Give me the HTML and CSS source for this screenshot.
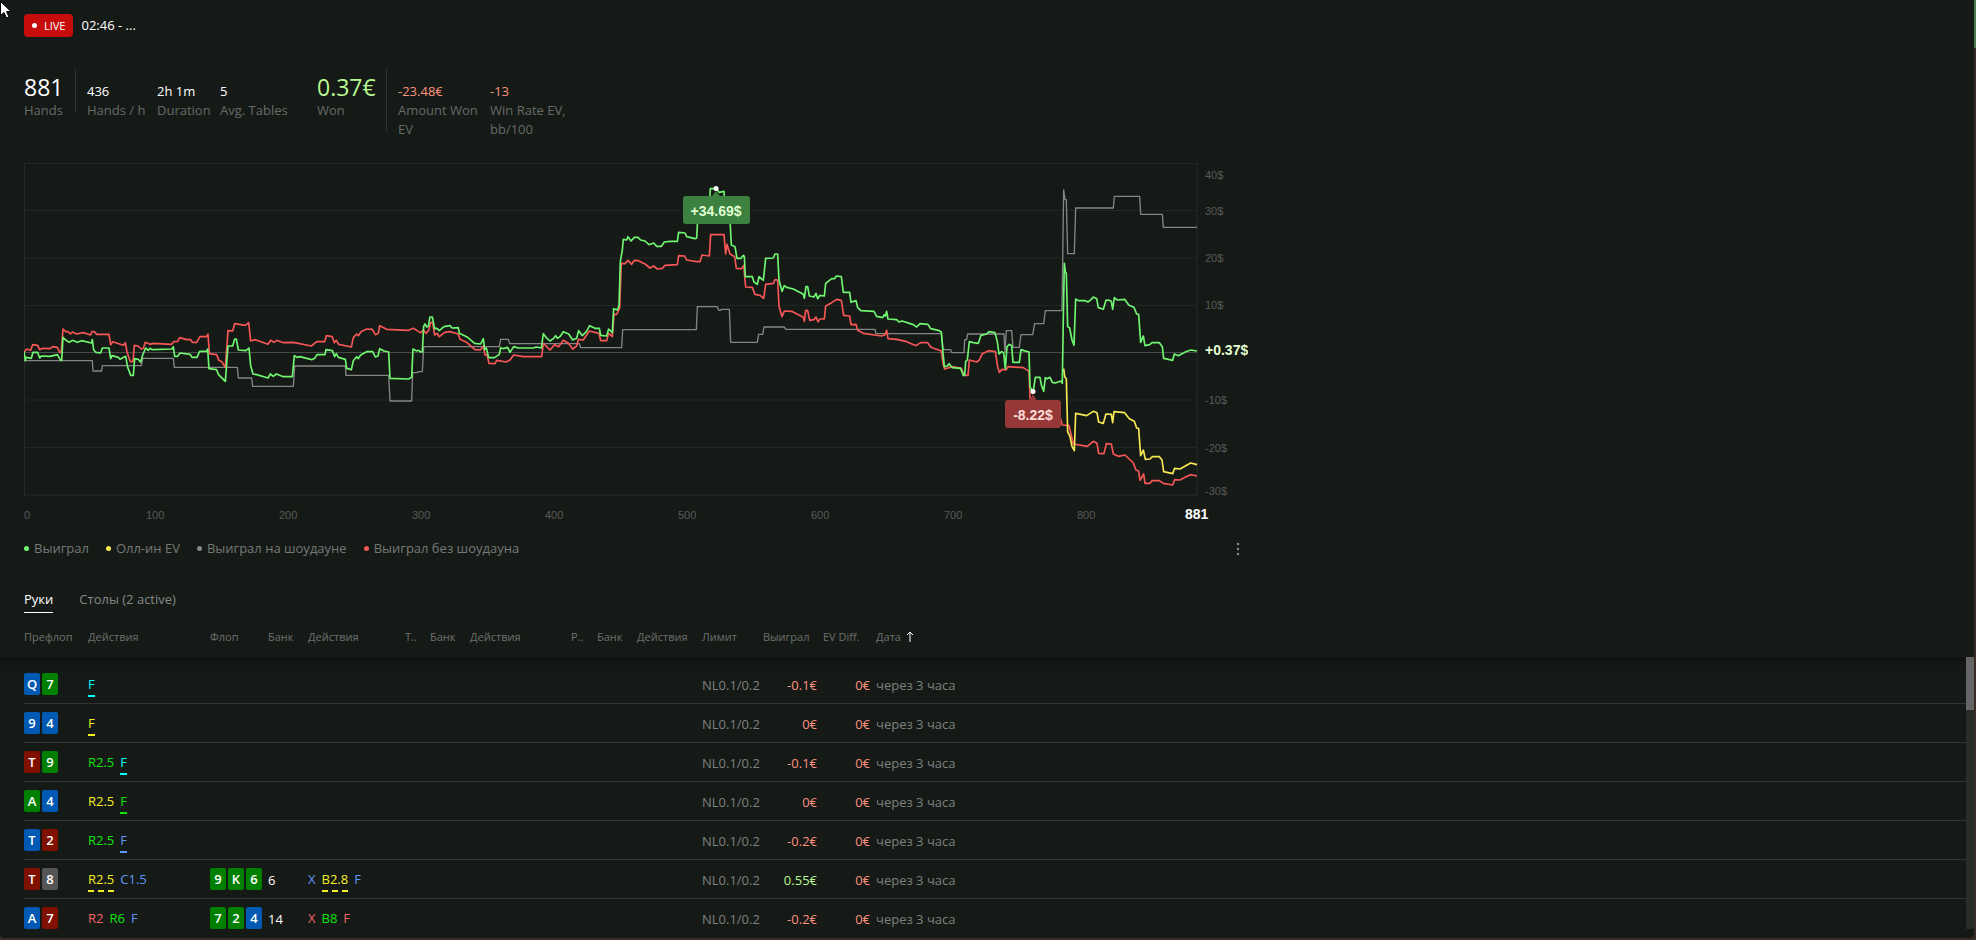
FILE: index.html
```html
<!DOCTYPE html>
<html lang="ru">
<head>
<meta charset="utf-8">
<title>02:46 - ...</title>
<link rel="stylesheet" href="styles.css">
</head>
<body>
<svg class="cursor" width="12" height="20" viewBox="0 0 12 20" aria-hidden="true"><path d="M.5 1.500V15.500L4 12.500L6.500 18L9 17L6.500 11.500H11Z" fill="#fff" stroke="#000" stroke-width="1"/></svg>
<main class="window">
  <header class="session">
    <span class="live"><i></i>LIVE</span>
    <h1>02:46 - ...</h1>
  </header>

  <section class="stats">
    <dl class="group hands-group">
      <div class="stat big first"><dd>881</dd><dt>Hands</dt></div>
      <div class="rule"></div>
      <div class="stat rate"><dd>436</dd><dt>Hands / h</dt></div>
      <div class="stat duration"><dd>2h 1m</dd><dt>Duration</dt></div>
      <div class="stat"><dd>5</dd><dt>Avg. Tables</dt></div>
    </dl>
    <dl class="group">
      <div class="stat big won"><dd class="pos">0.37€</dd><dt>Won</dt></div>
      <div class="rule"></div>
      <div class="stat wide"><dd class="neg">-23.48€</dd><dt>Amount Won EV</dt></div>
      <div class="stat wide"><dd class="neg">-13</dd><dt>Win Rate EV, bb/100</dt></div>
    </dl>
  </section>

  <section class="graph">
    <svg class="chart" viewBox="0 0 1224 364" role="img" aria-label="График выигрыша">
      <g class="grid">
        <path d="M0 1.500H1173M0 48.500H1173M0 96H1173M0 143.500H1173M0 238H1173M0 285.500H1173"/>
        <path class="frame" d="M.5 1V333M1173 1V333M0 333H1173.500"/>
        <path class="zero" d="M0 190.500H1173"/>
      </g>
      <g class="lines" transform="translate(-24 -12) scale(.33333)">
        <polyline class="gray" points="72,632 277,632 279,663 305,663 307,647 424,647 428,625 520,625 523,652 712,652 715,684 755,684 758,709 880,709 884,648 1036,648 1038,676 1166,676 1170,753 1235,753 1238,668 1251,668 1256,665 1267,665 1271,590 1498,590 1502,568 1525,568 1529,581 1738,581 1742,593 1865,593 1868,539 2089,539 2092,470 2152,470 2156,481 2162,481 2164,478 2188,478 2192,577 2272,577 2276,553 2288,553 2292,531 2353,531 2357,538 2625,538 2628,551 2824,551 2830,599 2852,599 2856,608 2892,608 2894,570 2900,568 2903,552 3012,552 3015,607 3019,542 3035,542 3039,592 3058,592 3063,554 3098,554 3104,521 3131,521 3136,482 3186,482 3191,120 3195,149 3199,149 3203,311 3223,311 3227,174 3340,174 3343,139 3419,139 3422,193 3487,193 3490,232 3591,232"/>
        <polyline class="red" points="72,607 80,597 92,601 98,584 113,586 119,599 128,595 150,596 158,590 172,592 180,608 184,605 189,537 197,545 204,545 211,552 217,546 230,552 250,548 272,555 276,545 283,545 290,553 327,553 332,584 338,575 370,586 376,578 381,606 391,635 399,635 403,586 414,588 424,597 430,595 436,577 450,583 460,580 515,583 521,575 533,574 539,563 560,569 572,569 577,577 590,577 600,560 620,560 624,552 628,611 650,614 656,630 666,636 676,652 684,542 698,543 704,521 736,526 746,518 752,573 766,569 804,583 812,571 822,577 830,571 850,578 880,577 934,588 950,575 974,575 979,557 997,560 1003,578 1009,571 1016,583 1054,591 1060,563 1070,552 1075,557 1083,545 1100,537 1117,538 1126,554 1135,550 1139,527 1160,538 1225,541 1240,535 1256,545 1262,548 1270,540 1278,550 1286,541 1292,518 1298,518 1304,555 1311,550 1318,560 1334,547 1350,545 1375,552 1380,568 1400,577 1425,599 1441,600 1450,588 1455,615 1461,614 1467,640 1485,641 1490,631 1518,636 1530,630 1541,615 1570,620 1625,620 1630,580 1650,600 1664,584 1676,590 1690,571 1705,580 1718,597 1730,588 1735,568 1750,570 1768,543 1797,550 1802,572 1820,572 1826,550 1837,560 1842,493 1850,493 1859,475 1864,340 1875,341 1884,331 1895,343 1903,331 1915,332 1935,342 1950,354 1961,348 1972,357 1988,355 1995,346 2032,344 2036,317 2054,318 2060,330 2090,335 2100,335 2106,315 2128,318 2132,254 2172,254 2177,312 2181,283 2190,312 2204,320 2209,355 2225,356 2231,346 2237,411 2257,412 2265,433 2280,436 2291,445 2297,403 2320,400 2325,389 2333,390 2337,468 2346,500 2353,483 2375,484 2410,502 2413,514 2417,481 2423,482 2429,511 2442,509 2448,501 2454,515 2460,507 2473,507 2477,468 2495,458 2510,448 2524,451 2531,496 2549,498 2553,524 2568,523 2573,541 2590,550 2645,558 2655,554 2660,541 2664,566 2690,568 2720,575 2748,587 2762,578 2783,578 2793,592 2824,603 2829,640 2834,657 2857,650 2884,655 2892,676 2904,676 2908,630 2930,636 2938,630 2947,611 2966,602 2986,605 2993,650 2998,667 3006,658 3018,660 3024,650 3070,653 3087,664 3090,745 3100,765 3180,800 3187,825 3207,827 3220,882 3262,889 3280,874 3291,880 3296,910 3312,911 3319,881 3334,882 3340,912 3355,919 3375,915 3400,939 3408,960 3416,963 3420,991 3431,972 3435,1000 3450,1000 3456,992 3478,992 3490,1000 3518,1005 3524,989 3540,990 3555,982 3572,974 3591,978"/>
        <polyline class="yellow" points="3191,656 3194,680 3199,686 3203,845 3210,860 3216,889 3223,902 3227,790 3260,797 3280,784 3291,788 3296,816 3310,820 3318,792 3334,793 3338,818 3342,785 3374,788 3388,806 3403,814 3410,834 3416,836 3422,917 3430,900 3436,928 3450,927 3457,920 3478,920 3486,930 3491,965 3518,971 3524,955 3540,957 3556,948 3572,939 3591,944"/>
        <polyline class="green" points="72,605 76,632 78,622 94,625 99,607 113,607 119,624 124,618 150,619 172,614 182,631 185,631 189,562 197,570 208,577 217,571 232,577 245,572 274,579 277,569 281,600 288,607 302,609 307,594 327,594 332,626 336,617 355,622 360,628 377,619 383,652 392,676 400,676 404,626 415,628 422,637 428,615 437,594 445,601 450,595 457,599 516,597 520,590 524,619 533,619 540,609 570,613 576,622 591,622 599,604 620,604 623,597 627,656 650,659 655,673 676,694 684,588 698,588 704,567 709,567 715,600 738,602 747,594 752,647 759,672 770,674 804,684 811,672 820,679 829,672 850,680 877,680 883,617 891,622 900,620 935,629 944,625 951,614 975,614 978,599 997,602 1004,620 1009,611 1015,622 1036,628 1040,655 1054,659 1060,632 1070,620 1075,626 1082,615 1100,605 1118,605 1126,621 1134,618 1139,596 1152,603 1166,606 1170,685 1226,687 1235,682 1239,597 1250,603 1256,601 1262,606 1267,606 1271,529 1275,522 1280,531 1285,529 1290,501 1297,501 1304,536 1311,535 1318,542 1332,530 1350,527 1356,534 1375,533 1378,550 1400,560 1424,580 1442,582 1450,566 1454,599 1459,594 1466,623 1484,623 1498,613 1502,593 1510,596 1523,592 1530,607 1541,590 1555,594 1600,594 1609,591 1624,594 1630,551 1638,562 1650,573 1661,565 1667,557 1672,565 1680,560 1690,545 1706,552 1718,570 1730,565 1736,542 1747,557 1759,545 1769,527 1785,535 1798,535 1802,556 1820,558 1826,537 1837,548 1841,476 1852,480 1857,467 1861,335 1867,300 1870,268 1880,270 1884,260 1893,273 1903,262 1914,262 1922,270 1935,273 1947,284 1961,279 1970,289 1984,289 1993,276 2010,274 2032,274 2036,247 2055,249 2060,260 2085,266 2090,264 2095,170 2128,170 2131,116 2150,116 2157,127 2172,124 2175,180 2190,210 2194,285 2205,290 2211,325 2223,325 2230,316 2233,319 2236,380 2257,380 2262,396 2272,403 2277,380 2290,391 2297,325 2320,324 2325,312 2333,312 2337,390 2346,424 2353,407 2360,412 2380,417 2410,433 2413,445 2418,410 2423,410 2428,438 2442,441 2448,430 2453,446 2460,436 2473,438 2477,400 2495,386 2504,386 2509,378 2524,380 2530,427 2549,427 2553,457 2568,452 2573,473 2583,482 2622,484 2630,499 2648,503 2653,494 2656,498 2660,484 2664,507 2690,509 2697,516 2706,513 2740,524 2750,531 2760,521 2784,523 2792,536 2815,541 2824,546 2829,608 2833,650 2842,648 2847,641 2857,653 2882,655 2890,676 2894,676 2897,635 2902,630 2908,575 2920,578 2935,580 2943,556 2960,552 2967,545 2985,548 2992,575 2997,612 3005,605 3011,608 3016,656 3021,590 3028,583 3035,587 3039,637 3058,637 3063,599 3072,602 3087,606 3090,710 3097,725 3100,722 3106,682 3120,682 3124,704 3131,724 3136,683 3142,686 3150,682 3157,697 3166,699 3183,693 3187,700 3190,500 3193,340 3196,365 3199,370 3203,530 3209,534 3216,570 3222,586 3227,447 3235,452 3256,452 3264,456 3273,449 3280,441 3290,446 3295,473 3310,478 3318,451 3325,450 3334,454 3338,478 3343,443 3352,450 3374,448 3387,466 3402,472 3410,492 3416,493 3422,577 3430,558 3435,587 3449,584 3456,578 3478,578 3487,590 3491,625 3505,628 3518,631 3523,612 3535,617 3556,606 3572,600 3591,603"/>
      </g>
      <g class="tip max">
        <path d="M692 29L696 34H688Z"/><rect x="659" y="34" width="67" height="28" rx="3"/>
        <circle cx="692" cy="26.500" r="2.500"/><text x="692" y="54">+34.69$</text>
      </g>
      <g class="tip min">
        <path d="M1009 232L1013 239H1005Z"/><rect x="981" y="238" width="56" height="28" rx="3"/>
        <circle cx="1009" cy="229.500" r="2.500"/><text x="1009" y="258">-8.22$</text>
      </g>
      <g class="axis">
        <text x="1181" y="17">40$</text><text x="1181" y="53">30$</text><text x="1181" y="100">20$</text><text x="1181" y="147">10$</text>
        <text x="1181" y="242">-10$</text><text x="1181" y="290">-20$</text><text x="1181" y="333">-30$</text>
        <text class="now" x="1181" y="193">+0.37$</text>
        <text x="0" y="357">0</text><text x="122" y="357">100</text><text x="255" y="357">200</text><text x="388" y="357">300</text><text x="521" y="357">400</text><text x="654" y="357">500</text><text x="787" y="357">600</text><text x="920" y="357">700</text><text x="1053" y="357">800</text>
        <text class="total" x="1161" y="357">881</text>
      </g>
    </svg>
    <div class="legend-row">
      <ul class="legend">
        <li class="l-green">Выиграл</li>
        <li class="l-yellow">Олл-ин EV</li>
        <li class="l-gray">Выиграл на шоудауне</li>
        <li class="l-red">Выиграл без шоудауна</li>
      </ul>
      <button class="more" type="button" aria-label="Меню"><svg width="4" height="14" viewBox="0 0 4 14"><circle cx="2" cy="2" r="1.250"/><circle cx="2" cy="7" r="1.250"/><circle cx="2" cy="12" r="1.250"/></svg></button>
    </div>
  </section>

  <nav class="tabs">
    <button type="button" class="active">Руки</button>
    <button type="button">Столы (2 active)</button>
  </nav>

  <section class="hands">
    <table>
      <colgroup><col class="c64"><col class="c122"><col class="c58"><col class="c40"><col class="c97"><col class="c25"><col class="c40"><col class="c101"><col class="c26"><col class="c40"><col class="c65"><col class="c61"><col class="c60"><col class="c53"><col></colgroup>
      <thead><tr><th>Префлоп</th><th>Действия</th><th>Флоп</th><th>Банк</th><th>Действия</th><th>Т..</th><th>Банк</th><th>Действия</th><th>Р..</th><th>Банк</th><th>Действия</th><th>Лимит</th><th>Выиграл</th><th>EV Diff.</th><th>Дата <svg class="sort" width="8" height="11" viewBox="0 0 8 11"><path d="M4 11V1M1 4L4 1L7 4"/></svg></th></tr></thead>
      <tbody>
        <tr><td><b class="card d">Q</b><b class="card c">7</b></td><td><span class="act cyan line">F</span></td><td></td><td></td><td></td><td></td><td></td><td></td><td></td><td></td><td></td><td class="dim">NL0.1/0.2</td><td class="num neg">-0.1€</td><td class="num ev neg">0€</td><td class="dim">через 3 часа</td></tr>
        <tr><td><b class="card d">9</b><b class="card d">4</b></td><td><span class="act yel line">F</span></td><td></td><td></td><td></td><td></td><td></td><td></td><td></td><td></td><td></td><td class="dim">NL0.1/0.2</td><td class="num neg">0€</td><td class="num ev neg">0€</td><td class="dim">через 3 часа</td></tr>
        <tr><td><b class="card h">T</b><b class="card c">9</b></td><td><span class="act grn">R2.5</span><span class="act cyan line">F</span></td><td></td><td></td><td></td><td></td><td></td><td></td><td></td><td></td><td></td><td class="dim">NL0.1/0.2</td><td class="num neg">-0.1€</td><td class="num ev neg">0€</td><td class="dim">через 3 часа</td></tr>
        <tr><td><b class="card c">A</b><b class="card d">4</b></td><td><span class="act yel">R2.5</span><span class="act grn line">F</span></td><td></td><td></td><td></td><td></td><td></td><td></td><td></td><td></td><td></td><td class="dim">NL0.1/0.2</td><td class="num neg">0€</td><td class="num ev neg">0€</td><td class="dim">через 3 часа</td></tr>
        <tr><td><b class="card d">T</b><b class="card h">2</b></td><td><span class="act grn">R2.5</span><span class="act blu line">F</span></td><td></td><td></td><td></td><td></td><td></td><td></td><td></td><td></td><td></td><td class="dim">NL0.1/0.2</td><td class="num neg">-0.2€</td><td class="num ev neg">0€</td><td class="dim">через 3 часа</td></tr>
        <tr><td><b class="card h">T</b><b class="card s">8</b></td><td><span class="act yel dash">R2.5</span><span class="act blu">C1.5</span></td><td><b class="card c">9</b><b class="card c">K</b><b class="card c">6</b></td><td class="bank">6</td><td><span class="act blu">X</span><span class="act yel dash">B2.8</span><span class="act blu">F</span></td><td></td><td></td><td></td><td></td><td></td><td></td><td class="dim">NL0.1/0.2</td><td class="num pos">0.55€</td><td class="num ev neg">0€</td><td class="dim">через 3 часа</td></tr>
        <tr><td><b class="card d">A</b><b class="card h">7</b></td><td><span class="act red">R2</span><span class="act grn">R6</span><span class="act blu">F</span></td><td><b class="card c">7</b><b class="card c">2</b><b class="card d">4</b></td><td class="bank">14</td><td><span class="act red">X</span><span class="act grn">B8</span><span class="act red">F</span></td><td></td><td></td><td></td><td></td><td></td><td></td><td class="dim">NL0.1/0.2</td><td class="num neg">-0.2€</td><td class="num ev neg">0€</td><td class="dim">через 3 часа</td></tr>
      </tbody>
    </table>
    <div class="scrollbar"><div class="thumb"></div></div>
  </section>
</main>
</body>
</html>
```
FILE: styles.css
```css
* { box-sizing: border-box; }

body {
  margin: 0;
  border-bottom: 2px solid #3a2a28;
  background: linear-gradient(#4a7a4f 48px, #3a2a28 48px);
  color: #fff;
  font: 13px/19px "Open Sans", "Noto Sans", sans-serif;
}

button { border: 0; padding: 0; background: none; color: inherit; font: inherit; }

.cursor { position: absolute; top: 0; left: 0; }

.window {
  display: flex;
  flex-direction: column;
  min-height: calc(100vh - 2px);
  margin-right: 2px;
  border-radius: 0 0 4px 4px;
  background: #161a17;
}

.session { display: flex; align-items: center; gap: 8px; padding: 14px 24px 0; }
.session h1 { margin: 0; font-size: 13px; font-weight: 400; line-height: 23px; }
.live {
  display: flex;
  align-items: center;
  gap: 7px;
  padding: 0 8px;
  border-radius: 4px;
  background: #c60c0c;
  font-size: 11px;
  line-height: 23px;
}
.live i { width: 5px; height: 5px; border-radius: 50%; background: #fff; }

.stats { display: flex; padding: 32px 24px 23px; }
.group { display: flex; align-items: flex-start; margin: 0; }
.hands-group { width: 293px; }
.stat { margin-right: 12px; padding-top: 13px; color: #666a67; white-space: nowrap; }
.stat dd { margin: 0; color: #fff; }
.stat.big { padding-top: 4px; }
.big dd { font-size: 23px; line-height: 28px; }
.stat.first { width: 51px; margin: 0; }
.stat.won { width: 69px; margin: 0; }
.stat.wide { width: 80px; white-space: normal; }
.rule { width: 1px; height: 62px; margin-right: 11px; background: #303532; }
.hands-group .rule { height: 43px; }
.rate { width: 58px; }
.duration { width: 51px; }
.stat dd.pos, .pos { color: #b8f78f; }
.stat dd.neg, .neg { color: #fc9180; }

.graph { max-width: 1272px; padding: 0 24px; }
.chart { display: block; width: 100%; }
.grid path { fill: none; stroke: #222724; }
.grid .frame { stroke: #262a28; }
.grid .zero { stroke: #474a48; }
.lines polyline { fill: none; stroke-width: 5; stroke-linejoin: round; }
.lines .gray { stroke: #858585; stroke-width: 4; }
.lines .red { stroke: #f55757; }
.lines .yellow { stroke: #f7ea55; }
.lines .green { stroke: #70f570; }
.chart text { font: 11px "Liberation Sans", sans-serif; fill: #565a57; }
.chart .now { font-size: 14px; font-weight: 700; fill: #e2ffd0; }
.chart .total { font-size: 14px; font-weight: 700; fill: #fff; }
.chart .tip text { font-size: 14px; font-weight: 700; text-anchor: middle; }
.tip circle { fill: #fff; }
.max { fill: #3c8140; }
.chart .max text { fill: #dfffd0; }
.min { fill: #963838; }
.chart .min text { fill: #ffdcd6; }

.legend-row { display: flex; justify-content: space-between; align-items: center; padding: 13px 8px 0 0; }
.legend { display: flex; gap: 17px; margin: 0; padding: 0; list-style: none; color: #757976; }
.legend li { display: flex; align-items: center; gap: 5px; }
.legend li::before { content: ""; width: 5px; height: 5px; border-radius: 50%; background: currentColor; }
.l-green::before { color: #70f570; }
.l-yellow::before { color: #f7ea55; }
.l-gray::before { color: #858585; }
.l-red::before { color: #f55757; }
.more svg { display: block; fill: #858987; }

.tabs { display: flex; gap: 26px; padding: 32px 24px 0; color: #858987; }
.tabs button { padding-bottom: 3px; border-bottom: 1px solid transparent; }
.tabs .active { border-color: #fff; color: #fff; }

.hands { position: relative; padding: 3px 8px 0 24px; }
.hands::before {
  content: "";
  position: absolute;
  top: 44px;
  right: 8px;
  left: 0;
  height: 20px;
  background: linear-gradient(#111311, #161a17);
}
table { position: relative; width: 100%; table-layout: fixed; border-collapse: separate; border-spacing: 0; }
.c25 { width: 25px; } .c26 { width: 26px; } .c40 { width: 40px; } .c53 { width: 53px; }
.c58 { width: 58px; } .c60 { width: 60px; } .c61 { width: 61px; } .c64 { width: 64px; }
.c65 { width: 65px; } .c97 { width: 97px; } .c101 { width: 101px; } .c122 { width: 122px; }
th { height: 41px; padding: 0; color: #6c706d; font-size: 11px; font-weight: 400; text-align: left; white-space: nowrap; }
.sort { margin-left: 2px; vertical-align: -1px; fill: none; stroke: #fff; }
td { height: 39px; padding: 0; border-bottom: 1px solid #303532; white-space: nowrap; }
.dim, .num, .bank { padding-top: 2px; }
tbody tr:first-child td { height: 47px; padding-top: 8px; }
tbody tr:first-child .dim, tbody tr:first-child .num { padding-top: 10px; }
tbody tr:last-child td { height: 38px; border: 0; }
.card {
  display: inline-block;
  width: 16px;
  margin-right: 2px;
  border-radius: 2px;
  font-size: 13px;
  font-weight: 600;
  line-height: 22px;
  text-align: center;
  vertical-align: middle;
}
.d { background: #0059b3; }
.c { background: #008000; }
.h { background: #801000; }
.s { background: #555; }
.act { display: inline-block; height: 26px; margin-right: 6px; border-bottom: 2px solid transparent; line-height: 26px; vertical-align: middle; }
.line { border-color: currentColor; }
.dash { border: 0; background: repeating-linear-gradient(90deg, currentColor 0 6px, transparent 6px 10px) bottom / 100% 2px no-repeat; }
.cyan { color: #0ff; }
.yel { color: #f5ee25; }
.grn { color: #0de40d; }
.blu { color: #5c97f5; }
.act.red { color: #f06464; }
.dim { color: #7d817e; }
.num { padding-right: 6px; text-align: right; }

.scrollbar { position: absolute; top: 44px; right: 0; bottom: 8px; width: 8px; border-radius: 0 0 4px 0; background: #282d2a; }
.thumb { height: 53px; background: #656565; }
```
